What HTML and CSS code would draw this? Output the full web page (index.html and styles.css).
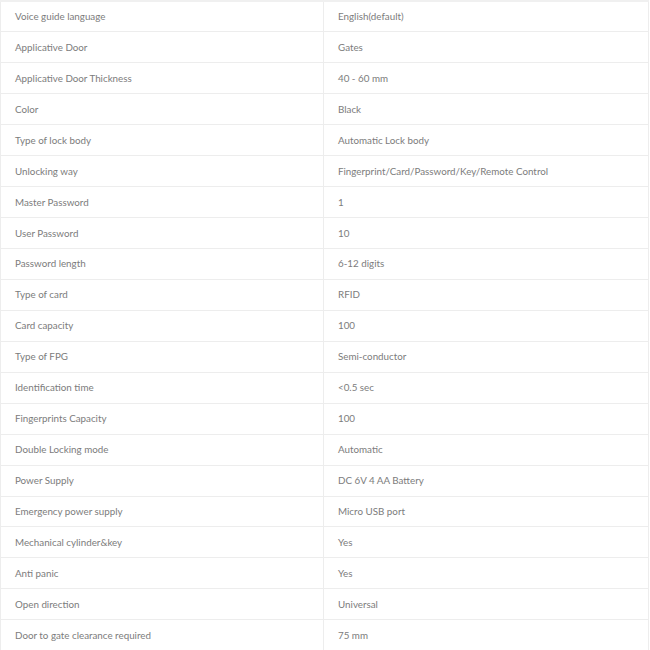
FILE: index.html
```html
<!DOCTYPE html>
<html>
<head>
<meta charset="utf-8">
<link rel="stylesheet" href="styles.css">
</head>
<body>
<table class="spec">
<tbody>
<tr><td>Voice guide language</td><td>English(default)</td></tr>
<tr><td>Applicative Door</td><td>Gates</td></tr>
<tr><td>Applicative Door Thickness</td><td>40 - 60 mm</td></tr>
<tr><td>Color</td><td>Black</td></tr>
<tr><td>Type of lock body</td><td>Automatic Lock body</td></tr>
<tr><td>Unlocking way</td><td>Fingerprint/Card/Password/Key/Remote Control</td></tr>
<tr><td>Master Password</td><td>1</td></tr>
<tr><td>User Password</td><td>10</td></tr>
<tr><td>Password length</td><td>6-12 digits</td></tr>
<tr><td>Type of card</td><td>RFID</td></tr>
<tr><td>Card capacity</td><td>100</td></tr>
<tr><td>Type of FPG</td><td>Semi-conductor</td></tr>
<tr><td>Identification time</td><td>&lt;0.5 sec</td></tr>
<tr><td>Fingerprints Capacity</td><td>100</td></tr>
<tr><td>Double Locking mode</td><td>Automatic</td></tr>
<tr><td>Power Supply</td><td>DC 6V 4 AA Battery</td></tr>
<tr><td>Emergency power supply</td><td>Micro USB port</td></tr>
<tr><td>Mechanical cylinder&amp;key</td><td>Yes</td></tr>
<tr><td>Anti panic</td><td>Yes</td></tr>
<tr><td>Open direction</td><td>Universal</td></tr>
<tr><td>Door to gate clearance required</td><td>75 mm</td></tr>
</tbody>
</table>
</body>
</html>
```
FILE: styles.css
```css
html, body {
  margin: 0;
  padding: 0;
  background: #fff;
}
.spec {
  width: 649px;
  border-collapse: collapse;
  font-family: Lato, sans-serif;
  font-size: 9.8px;
  color: #7c7c7c;
  table-layout: fixed;
}
.spec td {
  padding: 0 0 1px 14px;
  border: 1px solid #ededed;
  vertical-align: middle;
  box-sizing: border-box;
  height: 30.95px;
}
.spec td:first-child {
  width: 323px;
}
.spec tr:first-child td {
  border-top: 2px solid #f0f0f0;
}
```
